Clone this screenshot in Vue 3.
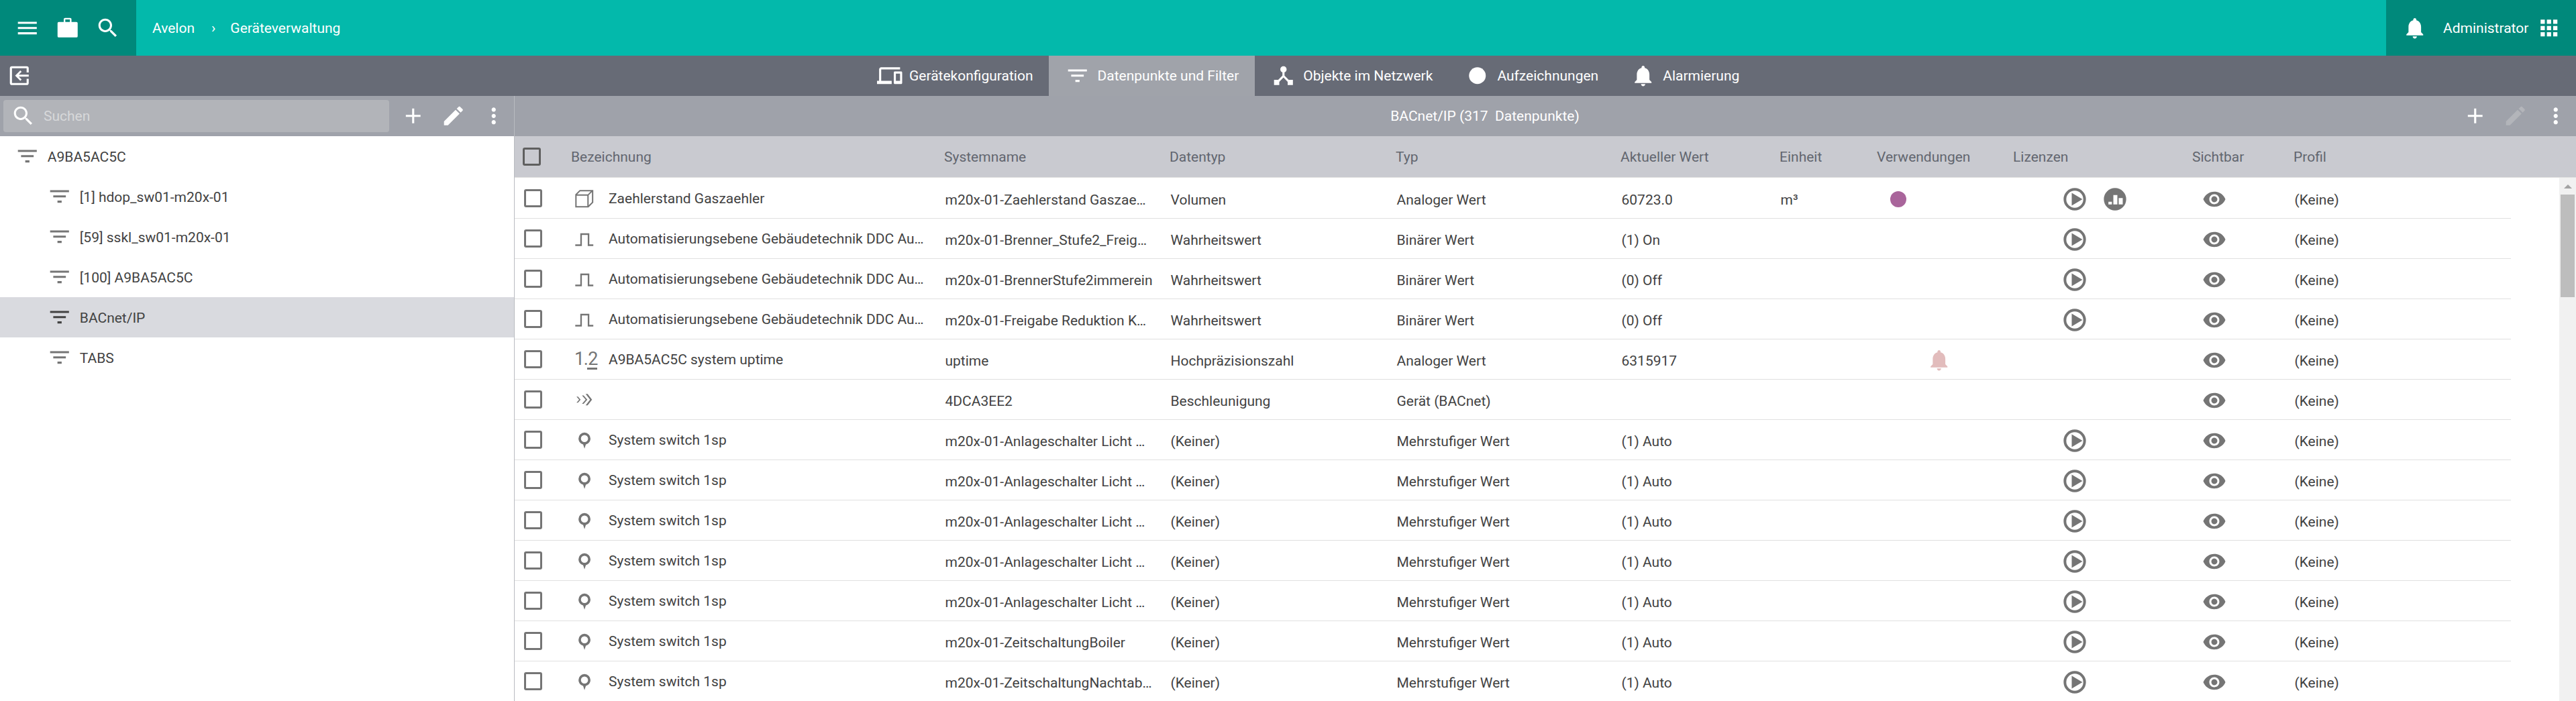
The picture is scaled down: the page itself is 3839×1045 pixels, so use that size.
<script setup>
const P = {
  menu: 'M3 18h18v-2H3v2zm0-5h18v-2H3v2zm0-7v2h18V6H3z',
  work: 'M3.6 6.2H8.3V3.6a1.2 1.2 0 0 1 1.2-1.2h5a1.2 1.2 0 0 1 1.2 1.2V6.2H20.4a1.2 1.2 0 0 1 1.2 1.2V19.8a1.2 1.2 0 0 1-1.2 1.2H3.6a1.2 1.2 0 0 1-1.2-1.2V7.4a1.2 1.2 0 0 1 1.2-1.2zM9.8 3.9V6.2H14.2V3.9z',
  search: 'M15.5 14h-.79l-.28-.27C15.41 12.59 16 11.11 16 9.5 16 5.91 13.09 3 9.5 3S3 5.91 3 9.5 5.91 16 9.5 16c1.61 0 3.09-.59 4.23-1.57l.27.28v.79l5 4.99L20.49 19l-4.99-5zm-6 0C7.01 14 5 11.99 5 9.5S7.01 5 9.5 5 14 7.01 14 9.5 11.99 14 9.5 14z',
  bell: 'M12 22c1.1 0 2-.9 2-2h-4c0 1.1.89 2 2 2zm6-6v-5c0-3.07-1.64-5.64-4.5-6.32V4c0-.83-.67-1.5-1.5-1.5s-1.5.67-1.5 1.5v.68C7.63 5.36 6 7.92 6 11v5l-2 2v1h16v-1l-2-2z',
  apps: 'M4 8h4V4H4v4zm6 12h4v-4h-4v4zm-6 0h4v-4H4v4zm0-6h4v-4H4v4zm6 0h4v-4h-4v4zm6-10v4h4V4h-4zm-6 4h4V4h-4v4zm6 6h4v-4h-4v4zm0 6h4v-4h-4v4z',
  devices: 'M4 6h18V4H4c-1.1 0-2 .9-2 2v11H0v3h14v-3H4V6zm19 2h-6c-.55 0-1 .45-1 1v10c0 .55.45 1 1 1h6c.55 0 1-.45 1-1V9c0-.55-.45-1-1-1zm-1 9h-4v-7h4v7z',
  filter: 'M10 18h4v-2h-4v2zM3 6v2h18V6H3zm3 7h12v-2H6v2z',
  hub: 'M17 16l-4-4V8.82C14.16 8.4 15 7.3 15 6c0-1.66-1.34-3-3-3S9 4.34 9 6c0 1.3.84 2.4 2 2.82V12l-4 4H3v5h5v-3.05l4-4.2 4 4.2V21h5v-5h-4z',
  dot: 'M12 4a8 8 0 1 0 0 16a8 8 0 1 0 0-16z',
  add: 'M19 13h-6v6h-2v-6H5v-2h6V5h2v6h6v2z',
  edit: 'M3 17.25V21h3.75L17.81 9.94l-3.75-3.75L3 17.25zM20.71 7.04c.39-.39.39-1.02 0-1.41l-2.34-2.34c-.39-.39-1.02-.39-1.41 0l-1.83 1.83 3.75 3.75 1.83-1.83z',
  more: 'M12 8c1.1 0 2-.9 2-2s-.9-2-2-2-2 .9-2 2 .9 2 2 2zm0 2c-1.1 0-2 .9-2 2s.9 2 2 2 2-.9 2-2-.9-2-2-2zm0 6c-1.1 0-2 .9-2 2s.9 2 2 2 2-.9 2-2-.9-2-2-2z',
  back: 'M5 3h14a2 2 0 0 1 2 2v4h-2V5H5v14h14v-4h2v4a2 2 0 0 1-2 2H5a2 2 0 0 1-2-2V5a2 2 0 0 1 2-2zM21 11H11.5l2.7-2.7-1.2-1.2L8 12l5 4.9 1.2-1.2-2.7-2.7H21z',
  play: 'M12 2a10 10 0 1 0 0 20a10 10 0 1 0 0-20zM12 4.4a7.6 7.6 0 1 1 0 15.2a7.6 7.6 0 1 1 0-15.2zM9.3 6.3L18.9 12 9.3 17.7z',
  chart: 'M12 2a10 10 0 1 0 0 20a10 10 0 1 0 0-20zM6.1 14.3H9.2V16.7H6.1zM10.5 8.3H14.1V16.7H10.5zM15.3 11H18.9V16.7H15.3z',
  eye: 'M12 4.5C7 4.5 2.73 7.61 1 12c1.73 4.39 6 7.5 11 7.5s9.27-3.11 11-7.5c-1.73-4.39-6-7.5-11-7.5zM12 17c-2.76 0-5-2.24-5-5s2.24-5 5-5 5 2.24 5 5-2.24 5-5 5zm0-8c-1.66 0-3 1.34-3 3s1.34 3 3 3 3-1.34 3-3-1.34-3-3-3z',
  cube: 'M7.6 4H20.6V16L16 20.6H3.4V8.2zM4.7 9.5V19.3H14.9V9.5zM8.1 5.3L5.2 8.2H15.4L18.2 5.3zM16.2 9V18.6L19.3 15.5V5.9z',
  pulse: 'M3.4 19v-1.5H8.2V6.9H16.8V17.5H20.6V19H15.3V8.4H9.7V19z',
  accel: 'M4.6 9.1H6L8.5 12 6 14.9H4.6L7.1 12zM9.8 8h1.6L14.9 12 11.4 16H9.8L13.3 12zM13.3 6.6h1.9L19.4 12 15.2 17.4h-1.9L17.5 12z',
  pin: 'M12.2 5a5.7 5.7 0 0 0-5.7 5.7c0 2.7 1.9 5 4.4 5.6L12.2 20.3l1.3-4c2.5-.6 4.4-2.9 4.4-5.6A5.7 5.7 0 0 0 12.2 5zM12.2 7.3a3.4 3.4 0 1 1 0 6.8a3.4 3.4 0 1 1 0-6.8z',
}

const tabs = [
  { icon: 'devices', label: 'Gerätekonfiguration' },
  { icon: 'filter', label: 'Datenpunkte und Filter', active: true },
  { icon: 'hub', label: 'Objekte im Netzwerk' },
  { icon: 'dot', label: 'Aufzeichnungen' },
  { icon: 'bell', label: 'Alarmierung' },
]

const tree = [
  { label: 'A9BA5AC5C', root: true },
  { label: '[1] hdop_sw01-m20x-01' },
  { label: '[59] sskl_sw01-m20x-01' },
  { label: '[100] A9BA5AC5C' },
  { label: 'BACnet/IP', active: true },
  { label: 'TABS' },
]

const columns = ['Bezeichnung', 'Systemname', 'Datentyp', 'Typ', 'Aktueller Wert', 'Einheit', 'Verwendungen', 'Lizenzen', 'Sichtbar', 'Profil']

const auto = (sys) => ({ icon: 'pin', name: 'System switch 1sp', sys, dtype: '(Keiner)', type: 'Mehrstufiger Wert', value: '(1) Auto', play: true })
const pulse = (sys, value) => ({ icon: 'pulse', name: 'Automatisierungsebene Gebäudetechnik DDC Au…', sys, dtype: 'Wahrheitswert', type: 'Binärer Wert', value, play: true })

const rows = [
  { icon: 'cube', name: 'Zaehlerstand Gaszaehler', sys: 'm20x-01-Zaehlerstand Gaszae…', dtype: 'Volumen', type: 'Analoger Wert', value: '60723.0', unit: 'm³', usage: 'dot', play: true, chart: true },
  pulse('m20x-01-Brenner_Stufe2_Freig…', '(1) On'),
  pulse('m20x-01-BrennerStufe2immerein', '(0) Off'),
  pulse('m20x-01-Freigabe Reduktion K…', '(0) Off'),
  { icon: 'num', name: 'A9BA5AC5C system uptime', sys: 'uptime', dtype: 'Hochpräzisionszahl', type: 'Analoger Wert', value: '6315917', usage: 'bell' },
  { icon: 'accel', name: '', sys: '4DCA3EE2', dtype: 'Beschleunigung', type: 'Gerät (BACnet)', value: '' },
  auto('m20x-01-Anlageschalter Licht …'),
  auto('m20x-01-Anlageschalter Licht …'),
  auto('m20x-01-Anlageschalter Licht …'),
  auto('m20x-01-Anlageschalter Licht …'),
  auto('m20x-01-Anlageschalter Licht …'),
  auto('m20x-01-ZeitschaltungBoiler'),
  auto('m20x-01-ZeitschaltungNachtab…'),
]
</script>

<template>
  <div class="app">
    <header class="top">
      <div class="top-left">
        <button class="btn60"><svg class="ic" viewBox="0 0 24 24"><path :d="P.menu" /></svg></button>
        <button class="btn60"><svg class="ic" viewBox="0 0 24 24"><path :d="P.work" /></svg></button>
        <button class="btn60"><svg class="ic" viewBox="0 0 24 24"><path :d="P.search" /></svg></button>
      </div>
      <nav class="crumbs">
        <span>Avelon</span><span class="sep">›</span><span>Geräteverwaltung</span>
      </nav>
      <div class="top-right">
        <svg class="ic" viewBox="0 0 24 24"><path :d="P.bell" /></svg>
        <span class="user">Administrator</span>
        <svg class="ic" viewBox="0 0 24 24"><path :d="P.apps" /></svg>
      </div>
    </header>

    <div class="tabbar">
      <button class="back"><svg class="ic" viewBox="0 0 24 24"><path :d="P.back" /></svg></button>
      <div class="tabs">
        <div v-for="t in tabs" :key="t.label" class="tab" :class="{ active: t.active }">
          <svg class="ic" viewBox="0 0 24 24"><path :d="P[t.icon]" /></svg>
          <span>{{ t.label }}</span>
        </div>
      </div>
    </div>

    <div class="main">
      <aside class="side">
        <div class="side-bar">
          <div class="searchbox">
            <svg class="ic" viewBox="0 0 24 24"><path :d="P.search" /></svg>
            <span>Suchen</span>
          </div>
          <button class="btn60"><svg class="ic" viewBox="0 0 24 24"><path :d="P.add" /></svg></button>
          <button class="btn60"><svg class="ic" viewBox="0 0 24 24"><path :d="P.edit" /></svg></button>
          <button class="btn60"><svg class="ic" viewBox="0 0 24 24"><path :d="P.more" /></svg></button>
        </div>
        <div
          v-for="n in tree"
          :key="n.label"
          class="node"
          :class="{ root: n.root, active: n.active }"
        >
          <svg class="ic" viewBox="0 0 24 24"><path :d="P.filter" /></svg>
          <span class="node-label">{{ n.label }}</span>
        </div>
      </aside>

      <section class="content">
        <div class="content-bar">
          <div class="title">BACnet/IP (317&nbsp; Datenpunkte)</div>
          <button class="btn60"><svg class="ic" viewBox="0 0 24 24"><path :d="P.add" /></svg></button>
          <button class="btn60 off"><svg class="ic" viewBox="0 0 24 24"><path :d="P.edit" /></svg></button>
          <button class="btn60"><svg class="ic" viewBox="0 0 24 24"><path :d="P.more" /></svg></button>
        </div>

        <div class="thead">
          <div class="cell-check"><span class="check dark"></span></div>
          <div v-for="c in columns" :key="c" class="th">{{ c }}</div>
        </div>

        <div class="body">
          <div class="rows">
            <div v-for="(r, i) in rows" :key="i" class="row">
              <div class="cell-check"><span class="check"></span></div>
              <div class="name">
                <span v-if="r.icon === 'num'" class="num">1.<u>2</u></span>
                <svg v-else class="ic" viewBox="0 0 24 24"><path :d="P[r.icon]" /></svg>
                <span>{{ r.name }}</span>
              </div>
              <div class="td">{{ r.sys }}</div>
              <div class="td">{{ r.dtype }}</div>
              <div class="td">{{ r.type }}</div>
              <div class="td">{{ r.value }}</div>
              <div class="td">{{ r.unit }}</div>
              <div class="td-ic">
                <span v-if="r.usage === 'dot'" class="usage-dot"></span>
                <svg v-if="r.usage === 'bell'" class="ic usage-bell" viewBox="0 0 24 24"><path :d="P.bell" /></svg>
              </div>
              <div class="td-ic">
                <svg v-if="r.play" class="ic licic" viewBox="0 0 24 24"><path :d="P.play" /></svg>
                <svg v-if="r.chart" class="ic licic chart" viewBox="0 0 24 24"><path :d="P.chart" /></svg>
              </div>
              <div class="td-ic"><svg class="ic eye" viewBox="0 0 24 24"><path :d="P.eye" /></svg></div>
              <div class="td">(Keine)</div>
            </div>
          </div>
          <div class="scroll">
            <div class="arrow"></div>
            <div class="thumb"></div>
          </div>
        </div>
      </section>
    </div>
  </div>
</template>

<style>
html, body { margin: 0; background: #fff; overflow: hidden; }
</style>

<style scoped>
.app {
  width: 3839px;
  height: 1045px;
  overflow: hidden;
  font-family: Roboto, "Liberation Sans", sans-serif;
  font-size: 21px;
  color: #424242;
  background: #fff;
}
button { all: unset; display: flex; align-items: center; justify-content: center; }
.ic { width: 37.5px; height: 37.5px; flex: none; display: block; fill: currentColor; }
.btn60 { width: 60px; height: 60px; color: #fff; flex: none; }
.btn60.off { color: #b3b5ba; }

.top { height: 83px; display: flex; background: #03b9ab; color: #fff; }
.top-left { width: 203px; box-sizing: border-box; padding: 12px 0 0 11px; display: flex; background: #00897b; }
.crumbs { flex: 1; display: flex; align-items: center; padding-left: 24px; }
.sep { margin: 0 22px 0 25px; }
.top-right { width: 283px; box-sizing: border-box; padding-left: 24px; display: flex; align-items: center; background: #00897b; }
.user { margin: 0 12px 0 23.5px; }

.tabbar { height: 60px; display: flex; background: #676b76; color: #fff; }
.back { width: 47.5px; height: 60px; padding-left: 10px; flex: none; justify-content: flex-start; }
.tabs { display: flex; margin-left: 1225.5px; }
.tab { display: flex; align-items: center; gap: 10.5px; padding: 0 24px; }
.tab.active { background: #a0a3aa; }

.main { display: flex; height: 902px; }
.side { width: 766px; flex: none; }
.side-bar { height: 60px; display: flex; align-items: center; background: #9fa2aa; }
.searchbox {
  width: 575px;
  height: 48px;
  margin: 0 6px 0 5px;
  border-radius: 4px;
  background: #b2b4b9;
  color: #fff;
  display: flex;
  align-items: center;
  padding-left: 11px;
  box-sizing: border-box;
  flex: none;
}
.searchbox span { color: #d7d8da; margin-left: 11.5px; }
.node { height: 60px; display: flex; align-items: center; gap: 11px; padding-left: 70.3px; }
.node.root { padding-left: 22.3px; }
.node .ic { color: #757575; }
.node-label { padding-top: 2px; }
.node.active { background: #d9dadf; }
.node.active .ic { color: #424242; }

.content { flex: 1; min-width: 0; border-left: 1px solid #b9bbc0; }
.content-bar { height: 60px; display: flex; align-items: center; background: #9fa2aa; color: #fff; }
.title { flex: 1; text-align: center; }

.thead, .row {
  display: grid;
  grid-template-columns: 84px 556px 336px 337px 335px 237px 145px 203px 267px 151px 324px;
  align-items: center;
}
.thead { height: 62px; box-sizing: border-box; background: #c9cad0; color: #62666f; border-bottom: 1px solid #e0e0e0; }
.th { white-space: nowrap; }
.cell-check { display: flex; align-items: center; padding-left: 14px; }
.thead .cell-check { padding-left: 12px; }
.check { width: 26.5px; height: 27px; box-sizing: border-box; border: 3px solid #757575; border-radius: 3px; display: block; }
.check.dark { border-color: #5f5f5f; }

.body { display: flex; height: 780px; }
.rows { width: 2975px; flex: none; padding-top: 1px; }
.row { height: 60px; box-sizing: border-box; border-bottom: 1px solid #e0e0e0; }
.td { white-space: nowrap; overflow: hidden; padding: 4px 0 0 1.5px; }
.td-ic { display: flex; align-items: center; padding: 2px 0 0 1.5px; }
.name { display: flex; align-items: center; gap: 17.5px; padding-left: 1px; white-space: nowrap; }
.name .ic { color: #757575; }
.num { width: 37.5px; height: 37.5px; flex: none; box-sizing: border-box; padding-left: 4px; font-size: 27px; line-height: 37.5px; letter-spacing: -1.5px; color: #757575; white-space: nowrap; }
.num u { text-decoration: none; display: inline-block; line-height: 25px; padding-left: 1px; border-bottom: 3px solid #757575; }
.usage-dot { width: 24px; height: 24px; border-radius: 50%; background: #a9659b; margin-left: 18px; display: block; }
.usage-bell { color: #e2bcbc; margin-left: 72px; }
.licic { width: 40px; height: 40px; color: #757575; margin-left: 70px; }
.licic.chart { margin-left: 20px; }
.eye { width: 36px; height: 36px; color: #757575; margin-left: 13px; }

.scroll { margin-left: 72px; width: 25px; background: #f1f1f1; flex: none; display: flex; flex-direction: column; align-items: center; }
.arrow { margin-top: 10px; width: 0; height: 0; border: 6px solid transparent; border-top: 0; border-bottom: 6px solid #a3a3a3; }
.thumb { margin-top: 9px; width: 21px; height: 153px; background: #bdbdbd; }
</style>
